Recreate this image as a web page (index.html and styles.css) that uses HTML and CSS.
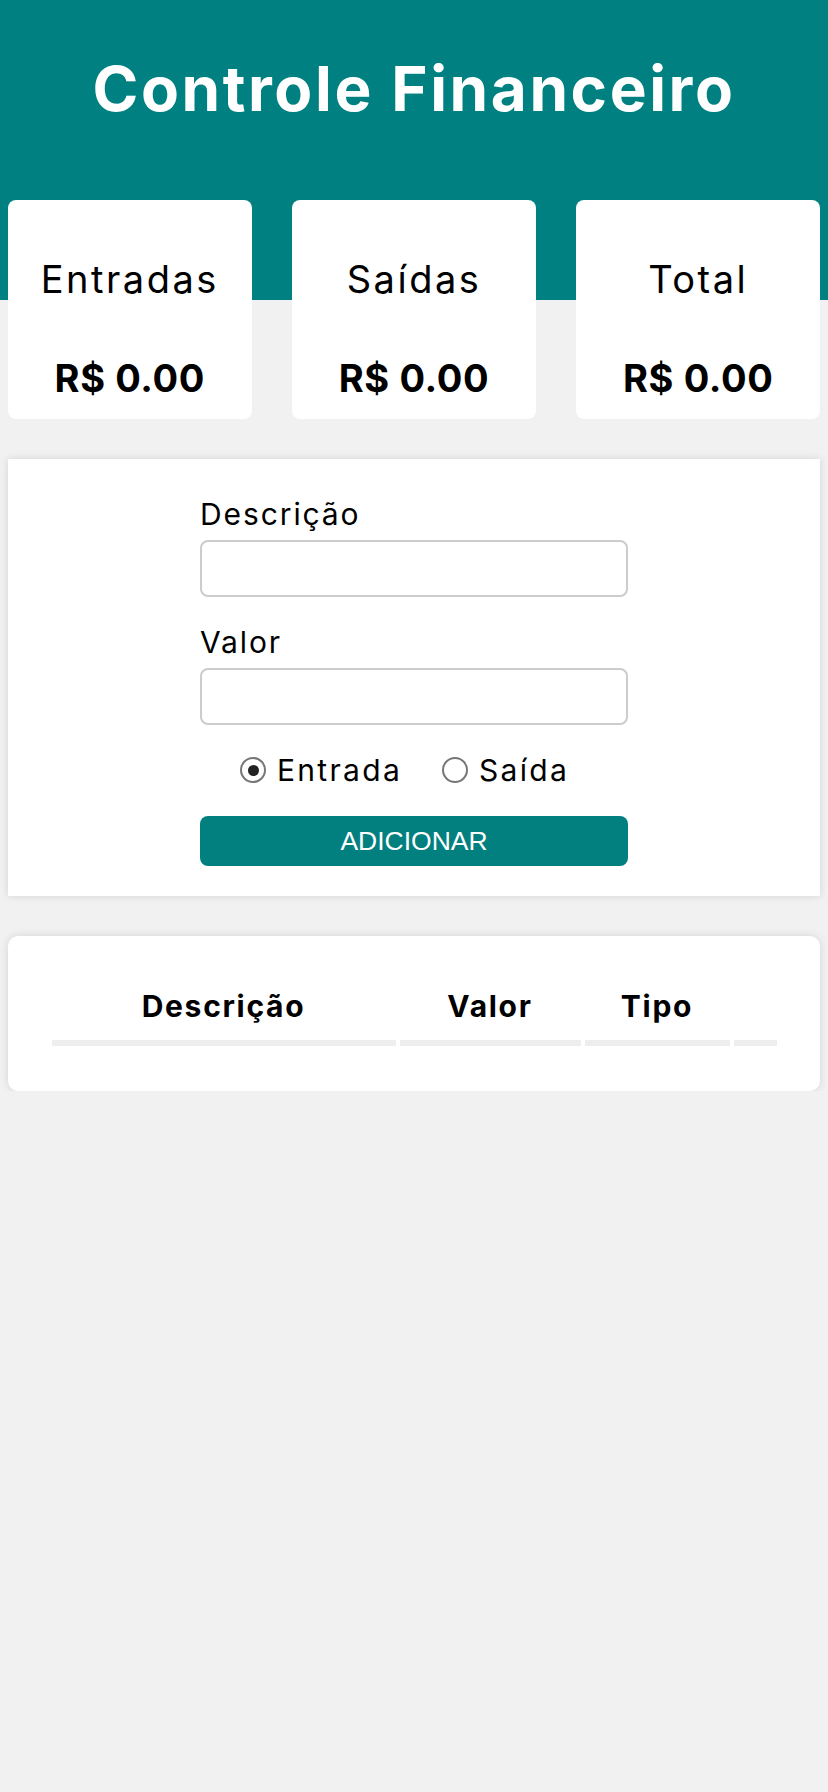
FILE: index.html
```html
<!DOCTYPE html>
<html lang="pt-BR">
<head>
<meta charset="utf-8">
<title>Controle Financeiro</title>
<link rel="stylesheet" href="styles.css">
</head>
<body>
  <header class="header">
    <h1 class="title">Controle Financeiro</h1>
  </header>

  <main class="page">
    <section class="summary">
      <div class="summary-card">
        <h3 class="summary-label">Entradas</h3>
        <p class="summary-value">R$ 0.00</p>
      </div>
      <div class="summary-card">
        <h3 class="summary-label">Saídas</h3>
        <p class="summary-value">R$ 0.00</p>
      </div>
      <div class="summary-card">
        <h3 class="summary-label">Total</h3>
        <p class="summary-value">R$ 0.00</p>
      </div>
    </section>

    <section class="form-card">
      <form class="form">
        <label class="field-label" for="desc">Descrição</label>
        <input class="field-input" id="desc" type="text">
        <label class="field-label" for="amount">Valor</label>
        <input class="field-input" id="amount" type="number">
        <div class="radio-row">
          <label class="radio-option">
            <input class="radio" type="radio" name="type" checked>
            <span>Entrada</span>
          </label>
          <label class="radio-option">
            <input class="radio" type="radio" name="type">
            <span>Saída</span>
          </label>
        </div>
        <button class="add-button" type="button">ADICIONAR</button>
      </form>
    </section>

    <section class="table-card">
      <table class="table">
        <thead>
          <tr>
            <th class="col-desc">Descrição</th>
            <th class="col-value">Valor</th>
            <th class="col-type">Tipo</th>
            <th class="col-action"></th>
          </tr>
        </thead>
        <tbody></tbody>
      </table>
    </section>
  </main>
</body>
</html>
```

FILE: styles.css
```css
* {
  box-sizing: border-box;
}

body {
  margin: 0;
  background: #f1f1f1;
  font-family: "Inter", "Noto Sans", sans-serif;
  color: #000;
}

.header {
  height: 300px;
  background: #008080;
  padding-top: 51px;
}

.title {
  margin: 0;
  text-align: center;
  color: #fff;
  font-size: 62px;
  line-height: 76px;
  font-weight: 700;
  letter-spacing: 2.6px;
}

.page {
  padding: 0 8px;
}

.summary {
  display: flex;
  justify-content: space-between;
  margin-top: -100px;
}

.summary-card {
  width: 30%;
  height: 219px;
  background: #fff;
  border-radius: 8px;
  padding-top: 59px;
  text-align: center;
}

.summary-label {
  margin: 0;
  font-size: 38px;
  line-height: 40px;
  font-weight: 400;
  letter-spacing: 2.5px;
}

.summary-value {
  margin: 59px 0 0;
  font-size: 38px;
  line-height: 40px;
  font-weight: 700;
  letter-spacing: 0.6px;
}

.form-card {
  margin-top: 40px;
  background: #fff;
  box-shadow: 0 0 8px rgba(0, 0, 0, 0.12);
  padding: 39px 0 30px;
}

.form {
  width: 428px;
  margin: 0 auto;
  display: flex;
  flex-direction: column;
}

.field-label {
  font-size: 30px;
  line-height: 32px;
  margin-bottom: 10px;
  letter-spacing: 1.9px;
}

.field-input {
  height: 57px;
  border: 2px solid #cccccc;
  border-radius: 8px;
  margin: 0 0 29px;
  font-size: 24px;
  padding: 0 10px;
  background: #fff;
}

.radio-row {
  display: flex;
  gap: 40px;
  padding-left: 40px;
  height: 32px;
  margin-bottom: 30px;
}

.radio-option {
  display: flex;
  align-items: center;
  gap: 11px;
  font-size: 30px;
  line-height: 32px;
  letter-spacing: 2.3px;
}

.radio {
  appearance: none;
  -webkit-appearance: none;
  margin: 0;
  width: 26px;
  height: 26px;
  border: 2.5px solid #767676;
  border-radius: 50%;
  background: #fff;
  display: grid;
  place-items: center;
}

.radio:checked::after {
  content: "";
  width: 11px;
  height: 11px;
  border-radius: 50%;
  background: #222;
}

.add-button {
  height: 50px;
  border: none;
  border-radius: 8px;
  background: #028080;
  color: #fff;
  font-family: "Liberation Sans", Arial, sans-serif;
  font-size: 26.5px;
  padding: 0;
}

.table-card {
  margin-top: 40px;
  background: #fff;
  border-radius: 10px;
  box-shadow: 0 0 8px rgba(0, 0, 0, 0.12);
  padding: 54px 0 45px;
}

.table {
  margin: 0 auto;
  border-collapse: separate;
  border-spacing: 4px 0;
}

.table th {
  font-size: 30px;
  line-height: 32px;
  font-weight: 700;
  padding: 0 0 18px;
  border-bottom: 6px solid #eeeeee;
  text-align: center;
  letter-spacing: 1.7px;
}

.col-desc {
  width: 344px;
}

.col-value {
  width: 181px;
}

.col-type {
  width: 145px;
}

.col-action {
  width: 43px;
}
```
